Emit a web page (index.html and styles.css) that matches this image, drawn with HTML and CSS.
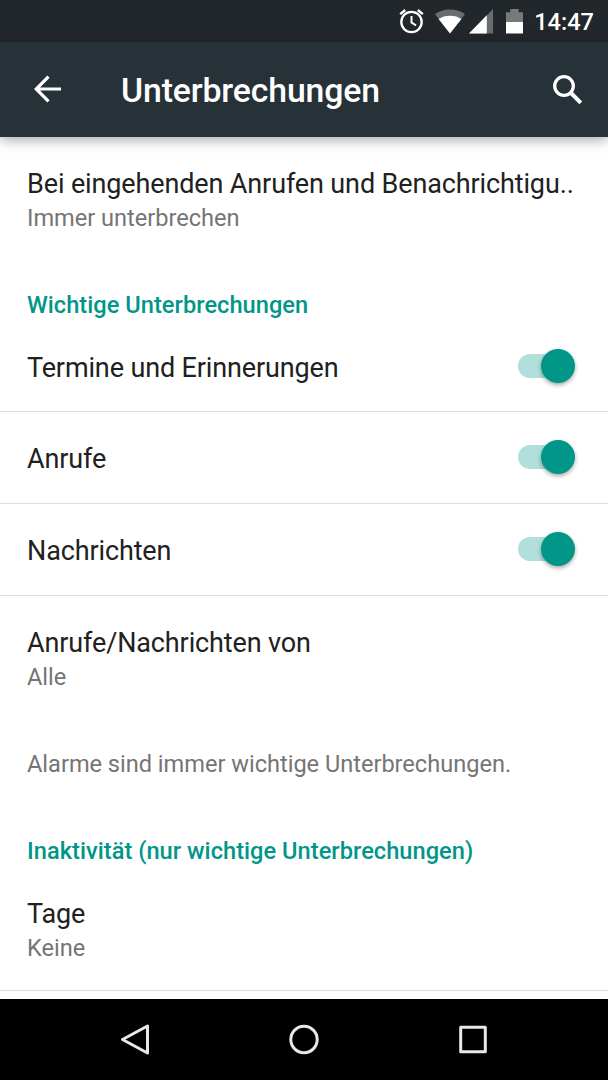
FILE: index.html
```html
<!DOCTYPE html>
<html lang="de">
<head>
    <meta charset="UTF-8">
    <meta name="viewport" content="width=device-width, initial-scale=1.0">
    <link rel="stylesheet" href="styles.css">
    <title>Unterbrechungen</title>
</head>
<body>

    <!-- Statusleiste -->
    <div class="statusbar">
        <svg class="icon-alarm" width="26" height="26" viewBox="0 0 26 26" fill="none" stroke="#fff">
            <circle cx="12.5" cy="14" r="10.2" stroke-width="2.3"/>
            <path d="M12.5 8v6.5l4.5 2.8" stroke-width="2"/>
            <path d="M1.2 6.2l5-4.2M18.8 2l5 4.2" stroke-width="2.4"/>
        </svg>
        <svg class="icon-wifi" width="30" height="25" viewBox="0 0 30 25">
            <path d="M15 24.5L0 5.3C4 2.2 9 .5 15 .5s11 1.7 15 4.8z" fill="#6a6d6f"/>
            <path d="M15 24.5L3.6 10.1C6.8 8 10.5 6.8 15 6.8s8.2 1.2 11.4 3.3z" fill="#fff"/>
        </svg>
        <svg class="icon-signal" width="24" height="25" viewBox="0 0 24 25">
            <path d="M0 24.5L24 0v24.5z" fill="#6a6d6f"/>
            <path d="M0 24.5L17.8 6.3v18.2z" fill="#fff"/>
        </svg>
        <svg class="icon-battery" width="17" height="25" viewBox="0 0 17 25">
            <path d="M0 3.2h4.3V0h8.4v3.2H17V13H0z" fill="#777a7a"/>
            <path d="M0 13h17v11.5H0z" fill="#fff"/>
        </svg>
        <span class="clock">14:47</span>
    </div>

    <!-- Kopfzeile -->
    <header class="toolbar">
        <svg width="28" height="28" viewBox="0 0 28 28" fill="none" stroke="#fff" stroke-width="3.2">
            <path d="M27 14H3M14.5 1.6L2.2 14l12.3 12.4"/>
        </svg>
        <h1>Unterbrechungen</h1>
        <svg class="icon-search" width="32" height="32" viewBox="0 0 32 32" fill="none" stroke="#fff">
            <circle cx="12" cy="12" r="9.3" stroke-width="3.3"/>
            <path d="M18.500 18.5l10.3 10.3" stroke-width="4"/>
        </svg>
    </header>

    <main class="settings">
        <div class="item first">
            <div class="title">Bei eingehenden Anrufen und Benachrichtigu..</div>
            <div class="summary">Immer unterbrechen</div>
        </div>

        <h2 class="category">Wichtige Unterbrechungen</h2>
        <div class="item switch-item">
            <div class="title">Termine und Erinnerungen</div>
            <div class="switch"><div class="thumb"></div></div>
        </div>
        <div class="item switch-item">
            <div class="title">Anrufe</div>
            <div class="switch"><div class="thumb"></div></div>
        </div>
        <div class="item switch-item">
            <div class="title">Nachrichten</div>
            <div class="switch"><div class="thumb"></div></div>
        </div>
        <div class="item callers">
            <div class="title">Anrufe/Nachrichten von</div>
            <div class="summary">Alle</div>
        </div>
        <div class="item note">
            <div class="summary">Alarme sind immer wichtige Unterbrechungen.</div>
        </div>

        <h2 class="category">Inaktivität (nur wichtige Unterbrechungen)</h2>
        <div class="item days">
            <div class="title">Tage</div>
            <div class="summary">Keine</div>
        </div>
    </main>

    <!-- Navigationsleiste -->
    <nav class="navbar">
        <svg width="34" height="34" viewBox="0 0 34 34">
            <path d="M29.5 3v27L4.500 16.5z"/>
        </svg>
        <svg width="34" height="34" viewBox="0 0 34 34">
            <circle cx="17" cy="16.5" r="13.2"/>
        </svg>
        <svg width="34" height="34" viewBox="0 0 34 34">
            <rect x="4.7" y="4.2" width="24.6" height="24.6"/>
        </svg>
    </nav>

</body>
</html>
```

FILE: styles.css
```css
* {
    box-sizing: border-box;
}

body {
    margin: 0;
    height: 1080px;
    display: flex;
    flex-direction: column;
    overflow: hidden;
    background-color: #fff;
    color: #212121;
    font-family: Roboto, sans-serif;
}

svg {
    display: block;
    flex: none;
}

.statusbar {
    flex: none;
    height: 42px;
    padding: 9px 14px 0 0;
    display: flex;
    justify-content: flex-end;
    align-items: flex-start;
    background-color: #21272b;
    color: #fff;
}

.icon-alarm {
    margin-right: 10px;
    margin-top: -1px;
}

.icon-wifi {
    margin-right: 4px;
}

.icon-signal {
    margin-right: 13px;
}

.icon-battery {
    margin-right: 11px;
}

.clock {
    font-size: 23.6px;
    font-weight: 500;
    line-height: 27px;
}

.toolbar {
    flex: none;
    height: 95px;
    padding: 0 24px 2px 34px;
    display: flex;
    align-items: center;
    background-color: #263238;
    box-shadow: 0 3px 12px rgba(0, 0, 0, 0.35);
}

.toolbar h1 {
    flex: 1;
    margin: 5px 0 0 59px;
    color: #fff;
    font-size: 33.8px;
    font-weight: 500;
    line-height: 40px;
    letter-spacing: -0.15px;
}

.icon-search {
    margin-top: 2px;
}

.settings {
    flex: 1;
    min-height: 0;
    overflow: hidden;
    margin-top: 14px;
}

.item {
    padding: 0 27px;
}

.title {
    font-size: 27px;
    line-height: 34px;
    letter-spacing: -0.13px;
    white-space: nowrap;
}

.summary {
    color: #757575;
    font-size: 23.6px;
    line-height: 34px;
    letter-spacing: -0.02px;
}

.category {
    margin: 0;
    padding: 0 27px;
    color: #009688;
    font-size: 23.6px;
    font-weight: 500;
    line-height: 34px;
    letter-spacing: 0.04px;
}

.first {
    height: 137px;
    padding-top: 16px;
}

.switch-item {
    height: 92px;
    display: flex;
    justify-content: space-between;
    align-items: center;
    border-bottom: 1px solid #dcdcdc;
}

.switch-item .title {
    padding-top: 2px;
}

.category + .switch-item {
    height: 90px;
}

.switch {
    width: 57px;
    height: 24px;
    margin: 0 6px 1px 0;
    display: flex;
    align-items: center;
    justify-content: flex-end;
    border-radius: 12px;
    background: linear-gradient(to right, #b2dfdb 40px, transparent 40px);
}

.thumb {
    width: 34px;
    height: 34px;
    flex: none;
    border-radius: 50%;
    background-color: #009688;
    box-shadow: 0 2px 4px rgba(0, 0, 0, 0.35);
}

.callers {
    height: 151px;
    padding-top: 30px;
}

.note {
    height: 87px;
}

.days {
    height: 123px;
    padding-top: 29px;
    border-bottom: 1px solid #dcdcdc;
}

.navbar {
    flex: none;
    height: 81px;
    padding: 0 118px;
    display: flex;
    justify-content: space-between;
    align-items: center;
    background-color: #000;
}

.navbar svg {
    fill: none;
    stroke: #e8e8e8;
    stroke-width: 3;
    stroke-linejoin: round;
}
```
